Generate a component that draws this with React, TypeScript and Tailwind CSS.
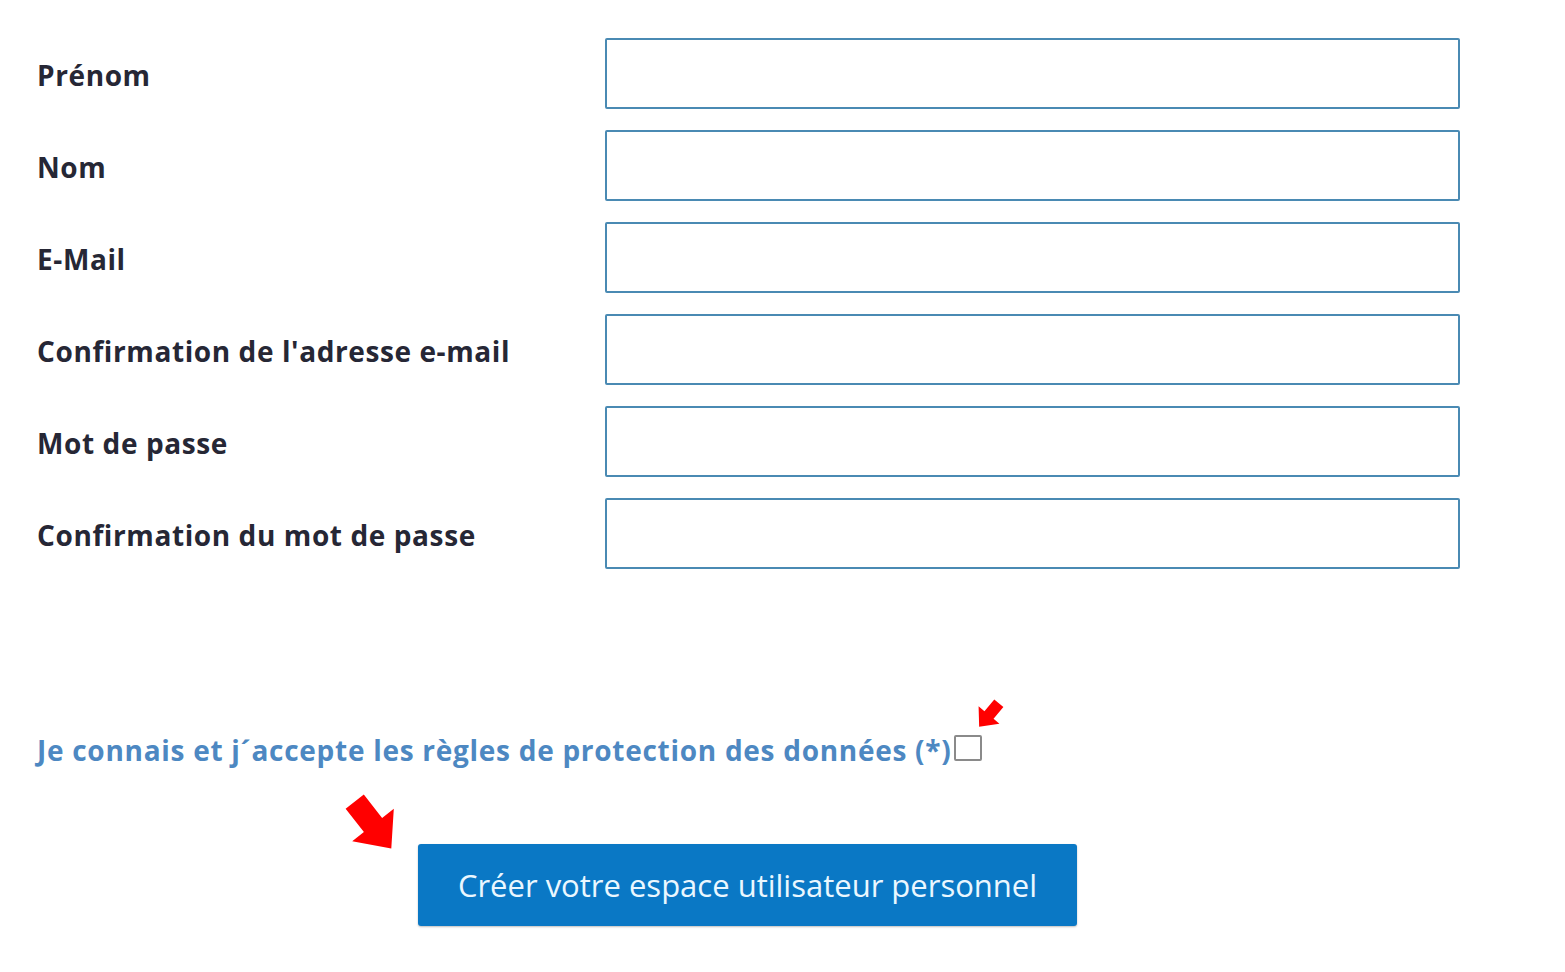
import React from "react";

const fields = [
  "Prénom",
  "Nom",
  "E-Mail",
  "Confirmation de l'adresse e-mail",
  "Mot de passe",
  "Confirmation du mot de passe",
];

function Arrow({ className, rotate }: { className: string; rotate: number }) {
  return (
    <svg className={className} viewBox="0 0 40 40" aria-hidden="true">
      <polygon
        transform={`rotate(${rotate} 20 20)`}
        points="13,2 27,2 27,20 36,20 20,38 4,20 13,20"
        fill="#ff0000"
      />
    </svg>
  );
}

export default function App() {
  return (
    <div
      className="relative min-h-[972px] w-full bg-white"
      style={{ fontFamily: "'Open Sans', Lato, sans-serif" }}
    >
      <div className="flex flex-col gap-[21px] pt-[38px]">
        {fields.map((label) => (
          <div key={label} className="flex items-center">
            <label className="mt-[2px] w-[605px] pl-[37px] text-[28px] font-bold tracking-[0.6px] text-[#262735]">
              {label}
            </label>
            <input
              type={label.includes("passe") ? "password" : "text"}
              className="h-[71px] w-[855px] rounded-[2px] border-2 border-[#4a8ab3] bg-white outline-none"
            />
          </div>
        ))}
      </div>

      <div className="mt-[166px] flex items-end pl-[37px]">
        <span className="text-[28px] font-bold leading-none tracking-[0.72px] text-[#4d88c2]">
          Je connais et j´accepte les règles de protection des données (*)
        </span>
        <span className="mb-[3px] ml-[2px] inline-block h-[26px] w-[28px] rounded-[2px] border-2 border-[#8a8a8a] bg-white" />
      </div>

      <div className="mt-[80px] pl-[418px]">
        <button
          type="button"
          className="h-[82px] w-[659px] rounded-[3px] bg-[#0a78c5] text-[31px] text-[#eaf7ff] shadow-[0_1px_2px_rgba(0,0,0,0.25)]"
        >
          Créer votre espace utilisateur personnel
        </button>
      </div>

      <Arrow className="absolute left-[972px] top-[698px] h-[34px] w-[34px]" rotate={40} />
      <Arrow className="absolute left-[340px] top-[792px] h-[66px] w-[66px]" rotate={-38} />
    </div>
  );
}
